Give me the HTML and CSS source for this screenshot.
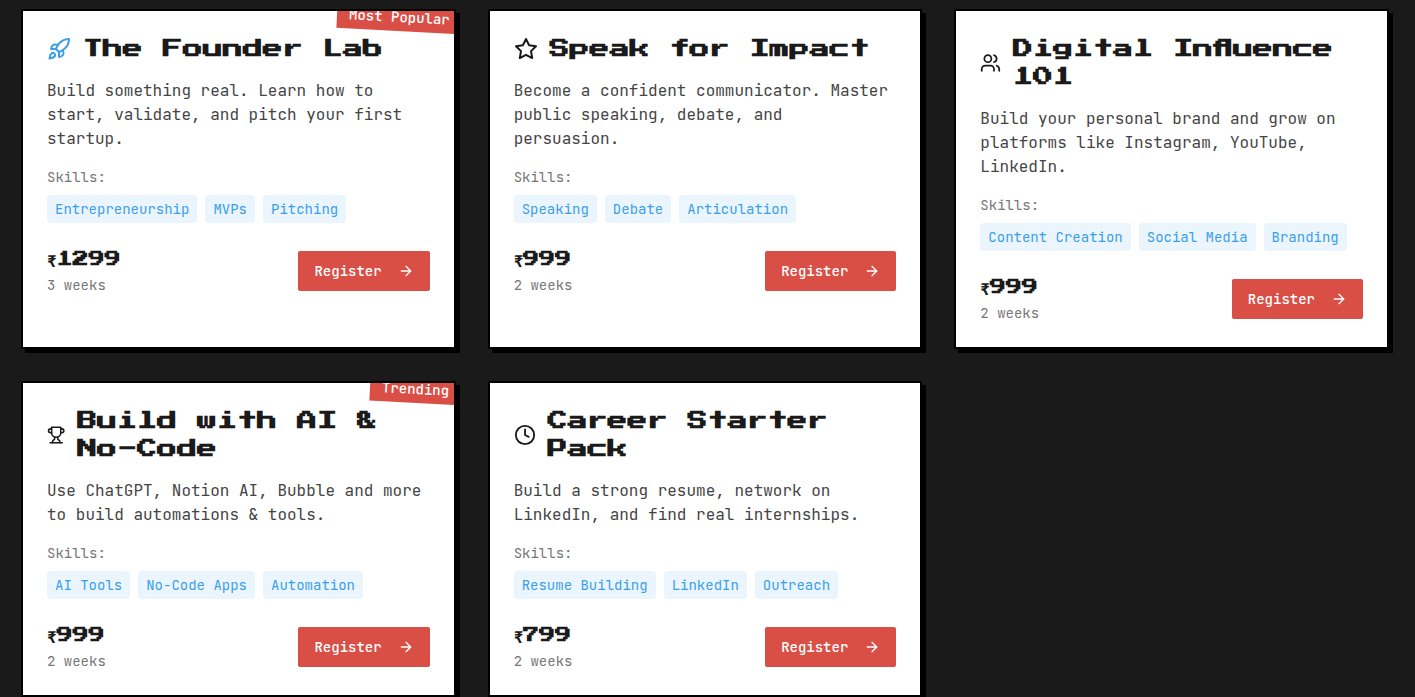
FILE: index.html
```html
<!DOCTYPE html>
<html lang="en">
<head>
<meta charset="utf-8">
<meta name="viewport" content="width=device-width, initial-scale=1">
<title>Programs</title>
<link rel="stylesheet" href="styles.css">
</head>
<body>
<main class="programs">

  <article class="card">
    <span class="ribbon">Most Popular</span>
    <header class="card-head">
      <svg class="icon icon-accent" viewBox="0 0 24 24" aria-hidden="true"><path d="M4.5 16.5c-1.5 1.26-2 5-2 5s3.74-.5 5-2c.71-.84.7-2.13-.09-2.91a2.18 2.18 0 0 0-2.91-.09z"/><path d="m12 15-3-3a22 22 0 0 1 2-3.95A12.88 12.88 0 0 1 22 2c0 2.72-.78 7.5-6 11a22.35 22.35 0 0 1-4 2z"/><path d="M9 12H4s.55-3.03 2-4c1.62-1.08 5 0 5 0"/><path d="M12 15v5s3.03-.55 4-2c1.08-1.62 0-5 0-5"/></svg>
      <h3 class="title">The Founder Lab</h3>
    </header>
    <p class="desc">Build something real. Learn how to start, validate, and pitch your first startup.</p>
    <p class="label">Skills:</p>
    <ul class="chips"><li class="chip">Entrepreneurship</li><li class="chip">MVPs</li><li class="chip">Pitching</li></ul>
    <footer class="card-foot">
      <div><p class="price">₹1299</p><p class="weeks">3 weeks</p></div>
      <button class="register" type="button">Register <svg class="arrow" viewBox="0 0 24 24" aria-hidden="true"><path d="M5 12h14"/><path d="m12 5 7 7-7 7"/></svg></button>
    </footer>
  </article>

  <article class="card">
    <header class="card-head">
      <svg class="icon" viewBox="0 0 24 24" aria-hidden="true"><path d="m12 2 3.09 6.26L22 9.27l-5 4.87 1.18 6.88L12 17.77l-6.18 3.25L7 14.14 2 9.27l6.91-1.01z"/></svg>
      <h3 class="title">Speak for Impact</h3>
    </header>
    <p class="desc">Become a confident communicator. Master public speaking, debate, and persuasion.</p>
    <p class="label">Skills:</p>
    <ul class="chips"><li class="chip">Speaking</li><li class="chip">Debate</li><li class="chip">Articulation</li></ul>
    <footer class="card-foot">
      <div><p class="price">₹999</p><p class="weeks">2 weeks</p></div>
      <button class="register" type="button">Register <svg class="arrow" viewBox="0 0 24 24" aria-hidden="true"><path d="M5 12h14"/><path d="m12 5 7 7-7 7"/></svg></button>
    </footer>
  </article>

  <article class="card">
    <header class="card-head">
      <svg class="icon" viewBox="0 0 24 24" aria-hidden="true"><path d="M16 21v-2a4 4 0 0 0-4-4H6a4 4 0 0 0-4 4v2"/><circle cx="9" cy="7" r="4"/><path d="M22 21v-2a4 4 0 0 0-3-3.87"/><path d="M16 3.13a4 4 0 0 1 0 7.75"/></svg>
      <h3 class="title">Digital Influence 101</h3>
    </header>
    <p class="desc">Build your personal brand and grow on platforms like Instagram, YouTube, LinkedIn.</p>
    <p class="label">Skills:</p>
    <ul class="chips"><li class="chip">Content Creation</li><li class="chip">Social Media</li><li class="chip">Branding</li></ul>
    <footer class="card-foot">
      <div><p class="price">₹999</p><p class="weeks">2 weeks</p></div>
      <button class="register" type="button">Register <svg class="arrow" viewBox="0 0 24 24" aria-hidden="true"><path d="M5 12h14"/><path d="m12 5 7 7-7 7"/></svg></button>
    </footer>
  </article>

  <article class="card">
    <span class="ribbon">Trending</span>
    <header class="card-head">
      <svg class="icon" viewBox="0 0 24 24" aria-hidden="true"><path d="M6 9H4.5a2.5 2.5 0 0 1 0-5H6"/><path d="M18 9h1.5a2.5 2.5 0 0 0 0-5H18"/><path d="M4 22h16"/><path d="M10 14.66V17c0 .55-.47.98-.97 1.21C7.85 18.75 7 20.24 7 22"/><path d="M14 14.66V17c0 .55.47.98.97 1.21C16.15 18.75 17 20.24 17 22"/><path d="M18 2H6v7a6 6 0 0 0 12 0V2Z"/></svg>
      <h3 class="title">Build with AI &amp; No-Code</h3>
    </header>
    <p class="desc">Use ChatGPT, Notion AI, Bubble and more to build automations &amp; tools.</p>
    <p class="label">Skills:</p>
    <ul class="chips"><li class="chip">AI Tools</li><li class="chip">No-Code Apps</li><li class="chip">Automation</li></ul>
    <footer class="card-foot">
      <div><p class="price">₹999</p><p class="weeks">2 weeks</p></div>
      <button class="register" type="button">Register <svg class="arrow" viewBox="0 0 24 24" aria-hidden="true"><path d="M5 12h14"/><path d="m12 5 7 7-7 7"/></svg></button>
    </footer>
  </article>

  <article class="card">
    <header class="card-head">
      <svg class="icon" viewBox="0 0 24 24" aria-hidden="true"><circle cx="12" cy="12" r="10"/><path d="M12 6v6l4 2"/></svg>
      <h3 class="title">Career Starter Pack</h3>
    </header>
    <p class="desc">Build a strong resume, network on LinkedIn, and find real internships.</p>
    <p class="label">Skills:</p>
    <ul class="chips"><li class="chip">Resume Building</li><li class="chip">LinkedIn</li><li class="chip">Outreach</li></ul>
    <footer class="card-foot">
      <div><p class="price">₹799</p><p class="weeks">2 weeks</p></div>
      <button class="register" type="button">Register <svg class="arrow" viewBox="0 0 24 24" aria-hidden="true"><path d="M5 12h14"/><path d="m12 5 7 7-7 7"/></svg></button>
    </footer>
  </article>

</main>
</body>
</html>
```
FILE: styles.css
```css
* {
  box-sizing: border-box;
  margin: 0;
  padding: 0;
}

body {
  background: #1a1a1a;
  color: #1a1a1a;
  font: 16px/24px "JetBrains Mono", "DejaVu Sans Mono", monospace;
}

.programs {
  display: grid;
  grid-template-columns: repeat(auto-fit, minmax(380px, 1fr));
  gap: 32px;
  padding: 9px 26px 0 21px;
}

.card {
  position: relative;
  overflow: hidden;
  padding: 24px;
  background: #fff;
  border: 2px solid #000;
  box-shadow: 4px 4px 0 #000;
}

.ribbon {
  position: absolute;
  top: -8px;
  right: -8px;
  padding: 4px 12px;
  background: #d94f45;
  color: #fff;
  font-size: 14px;
  line-height: 20px;
  font-weight: 500;
  transform: rotate(3deg);
}

.card-head {
  display: flex;
  align-items: center;
  gap: 12px;
  margin-bottom: 16px;
}

.icon {
  width: 24px;
  height: 24px;
  fill: none;
  stroke: currentColor;
  stroke-width: 2;
  stroke-linecap: round;
  stroke-linejoin: round;
}

.icon-accent {
  color: #3b9fe8;
}

.title,
.price {
  font-family: "Press Start 2P", "JetBrains Mono", monospace;
  font-weight: 700;
}

.title {
  font-size: 20px;
  line-height: 28px;
}

.price {
  margin-bottom: 4px;
  font-size: 16px;
  line-height: 24px;
}

.desc {
  margin-bottom: 16px;
  color: #444;
}

.label,
.weeks {
  color: #777;
  font-size: 14px;
  line-height: 20px;
}

.label {
  margin-bottom: 8px;
}

.chips {
  display: flex;
  flex-wrap: wrap;
  gap: 8px;
  margin-bottom: 24px;
  list-style: none;
}

.chip {
  padding: 4px 8px;
  border-radius: 4px;
  background: #ebf5fe;
  color: #3b9fe8;
  font-size: 14px;
  line-height: 20px;
}

.card-foot {
  display: flex;
  align-items: center;
  justify-content: space-between;
}

.register {
  display: flex;
  align-items: center;
  gap: 16px;
  padding: 10px 16px;
  border: 0;
  border-radius: 2px;
  background: #d94f45;
  color: #fff;
  font: inherit;
  font-size: 14px;
  line-height: 20px;
  font-weight: 500;
  cursor: pointer;
}

.arrow {
  width: 16px;
  height: 16px;
  fill: none;
  stroke: currentColor;
  stroke-width: 2;
  stroke-linecap: round;
  stroke-linejoin: round;
}
```
